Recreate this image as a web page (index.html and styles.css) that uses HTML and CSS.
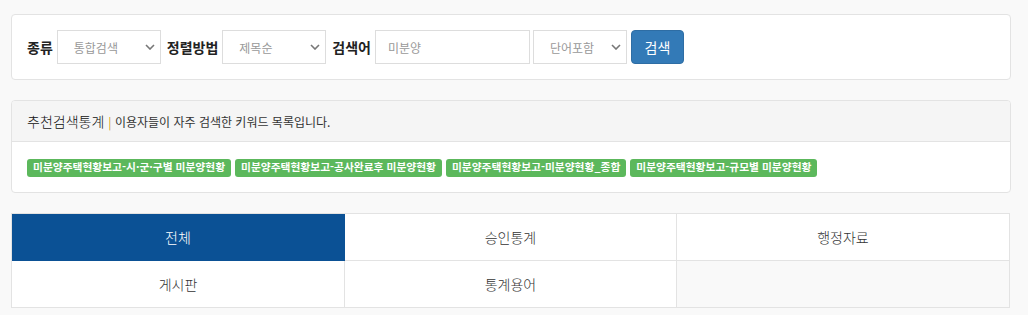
FILE: index.html
```html
<!DOCTYPE html>
<html lang="ko">
<head>
<meta charset="utf-8">
<title>검색</title>
<link rel="stylesheet" href="styles.css">
</head>
<body>
<div class="wrap">
  <form class="panel search">
    <label class="lbl">종류</label>
    <span class="sel w104"><select><option>통합검색</option></select><svg class="chev" viewBox="0 0 10 6" width="10" height="6"><path d="M1 1l4 4 4-4" fill="none" stroke="#777" stroke-width="1.6"/></svg></span>
    <label class="lbl">정렬방법</label>
    <span class="sel w104"><select><option>제목순</option></select><svg class="chev" viewBox="0 0 10 6" width="10" height="6"><path d="M1 1l4 4 4-4" fill="none" stroke="#777" stroke-width="1.6"/></svg></span>
    <label class="lbl">검색어</label>
    <input class="txt" type="text" placeholder="미분양">
    <span class="sel w94"><select class="c"><option>단어포함</option></select><svg class="chev" viewBox="0 0 10 6" width="10" height="6"><path d="M1 1l4 4 4-4" fill="none" stroke="#777" stroke-width="1.6"/></svg></span>
    <button type="button" class="btn">검색</button>
  </form>

  <div class="panel rec">
    <div class="rec-head"><span class="rec-title">추천검색통계</span> <span class="bar">|</span><span class="rec-sub"> 이용자들이 자주 검색한 키워드 목록입니다.</span></div>
    <div class="rec-body">
      <span class="tag">미분양주택현황보고-시·군·구별 미분양현황</span>
      <span class="tag">미분양주택현황보고-공사완료후 미분양현황</span>
      <span class="tag">미분양주택현황보고-미분양현황_종합</span>
      <span class="tag">미분양주택현황보고-규모별 미분양현황</span>
    </div>
  </div>

  <ul class="tabs">
    <li class="active">전체</li>
    <li>승인통계</li>
    <li>행정자료</li>
    <li>게시판</li>
    <li>통계용어</li>
    <li class="empty"></li>
  </ul>
</div>
</body>
</html>
```

FILE: styles.css
```css
* { box-sizing: border-box; }
html, body { margin: 0; padding: 0; }
body {
  background: #f9f9f9;
  color: #333;
  font-family: "Noto Sans CJK KR", "Noto Sans", sans-serif;
  font-size: 13px;
}
.wrap {
  width: 1000px;
  margin-left: 11px;
  padding-top: 14px;
}
.panel {
  background: #fff;
  border: 1px solid #e3e3e3;
  border-radius: 4px;
}
.search {
  display: flex;
  align-items: center;
  height: 66px;
  padding: 0 15px;
  margin: 0;
}
.lbl {
  font-size: 14px;
  font-weight: 700;
  color: #222;
  margin-right: 4px;
}
.sel {
  position: relative;
  display: inline-block;
  height: 34px;
  margin-right: 6px;
}
.w104 { width: 104px; }
.w94 { width: 94px; margin-left: 3px; margin-right: 4px; }
.sel select {
  -webkit-appearance: none;
  appearance: none;
  width: 100%;
  height: 100%;
  border: 1px solid #ddd;
  background: #fff;
  color: #999;
  font-family: inherit;
  font-size: 12px;
  padding: 0 0 0 16px;
  border-radius: 0;
  outline: none;
}
.sel select.c { padding-left: 16px; }
.chev {
  position: absolute;
  right: 6px;
  top: 14px;
  pointer-events: none;
}
.txt {
  width: 155px;
  height: 34px;
  border: 1px solid #ddd;
  padding: 0 12px;
  font-family: inherit;
  font-size: 12px;
  color: #555;
  outline: none;
}
.txt::placeholder { color: #999; }
.btn {
  width: 53px;
  height: 34px;
  background: #337ab7;
  border: 1px solid #2e6da4;
  border-radius: 4px;
  color: #fff;
  font-family: inherit;
  font-size: 14px;
  padding: 0;
}
.rec {
  margin-top: 20px;
  overflow: hidden;
}
.rec-head {
  height: 41px;
  background: #f5f5f5;
  border-bottom: 1px solid #e3e3e3;
  padding: 0 15px;
  display: flex;
  align-items: center;
}
.rec-title { font-size: 14px; font-weight: 300; color: #111; margin-right: 4px; }
.bar { color: #d4a017; font-size: 12px; }
.rec-sub { font-size: 12px; color: #333; white-space: pre; }
.rec-body {
  height: 50px;
  padding: 17px 15px 0;
  display: flex;
  gap: 4px;
  align-items: flex-start;
}
.tag {
  display: inline-block;
  background: #5cb85c;
  color: #fff;
  font-weight: 700;
  font-size: 10.75px;
  line-height: 1;
  padding: 3px 6px 4px;
  border-radius: 3px;
  height: 18px;
  white-space: nowrap;
}
.tabs {
  list-style: none;
  margin: 20px 0 0;
  padding: 0;
  display: grid;
  grid-template-columns: 333px 332px 333px;
  border-top: 1px solid #e3e3e3;
  border-left: 1px solid #e3e3e3;
  width: 999px;
}
.tabs li {
  height: 47px;
  display: flex;
  align-items: center;
  justify-content: center;
  background: #fff;
  border-right: 1px solid #e3e3e3;
  border-bottom: 1px solid #e3e3e3;
  font-size: 14px;
  font-weight: 300;
  color: #333;
}
.tabs li.active {
  background: #0b5195;
  color: #fff;
  border-color: #0b5195;
}
.tabs li.empty { background: #f9f9f9; }
```
